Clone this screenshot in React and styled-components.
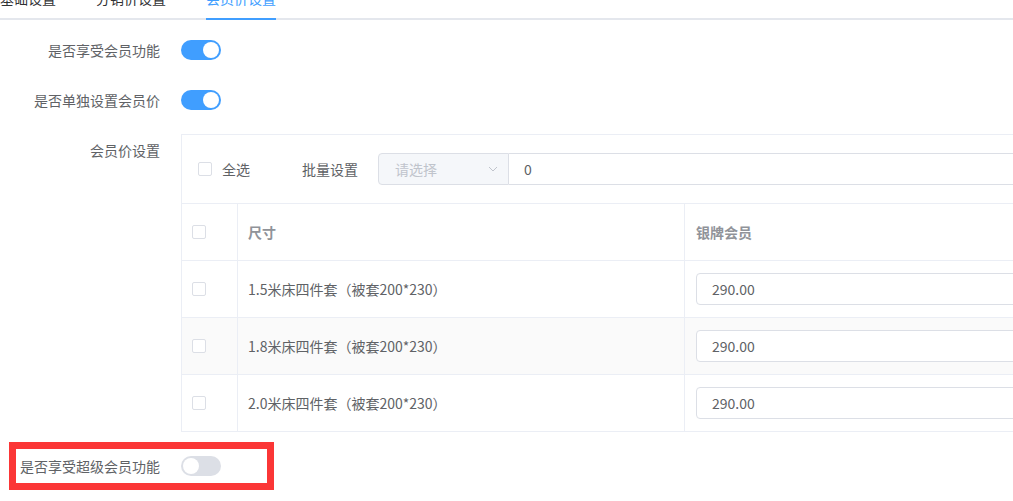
import styled, { createGlobalStyle } from "styled-components"

const Global = createGlobalStyle`
  html, body {
    margin: 0;
    padding: 0;
    background: #fff;
    overflow: hidden;
  }
  body {
    font-family: "Noto Sans CJK SC", "Microsoft YaHei", sans-serif;
    font-size: 14px;
    color: #606266;
  }
  * { box-sizing: border-box; }
`

const Page = styled.div`
  width: 1013px;
  height: 501px;
  overflow: hidden;
`

const TabBar = styled.div`
  display: flex;
  margin-top: -22px;
  border-bottom: 2px solid #e4e7ed;
  width: 1013px;
`

const Tab = styled.div`
  position: relative;
  height: 40px;
  line-height: 40px;
  padding: 0 20px;
  font-size: 14px;
  color: ${p => (p.active ? "#409eff" : "#303133")};
  &:first-child { padding-left: 0; }
  &::after {
    content: "";
    display: ${p => (p.active ? "block" : "none")};
    position: absolute;
    left: 20px;
    right: 20px;
    bottom: -2px;
    height: 2px;
    background: #409eff;
  }
`

const Form = styled.div`
  padding-top: 10px;
`

const FormItem = styled.div`
  display: flex;
  align-items: ${p => (p.top ? "flex-start" : "center")};
  margin-bottom: 10px;
`

const Label = styled.div`
  width: ${p => p.width || 160}px;
  flex: none;
  text-align: right;
  white-space: nowrap;
  line-height: 40px;
  height: 40px;
  font-size: 14px;
  color: #606266;
  margin-right: 21px;
`

const Switch = styled.div`
  position: relative;
  width: 40px;
  height: 20px;
  border-radius: 10px;
  background: ${p => (p.on ? "#409eff" : "#dcdfe6")};
  flex: none;
  &::after {
    content: "";
    position: absolute;
    top: 2px;
    left: ${p => (p.on ? "22px" : "2px")};
    width: 16px;
    height: 16px;
    border-radius: 50%;
    background: #fff;
  }
`

const TableBox = styled.div`
  margin-top: 4px;
  border: 1px solid #ebeef5;
  width: 1200px;
  flex: none;
`

const Toolbar = styled.div`
  height: 68px;
  display: flex;
  align-items: center;
  padding-left: 16px;
`

const Check = styled.span`
  display: inline-block;
  width: 14px;
  height: 14px;
  border: 1px solid #dcdfe6;
  border-radius: 2px;
  background: #fff;
  flex: none;
`

const CheckText = styled.span`
  margin-left: 10px;
  color: #606266;
  line-height: 20px;
`

const BatchLabel = styled.span`
  margin-left: 52px;
  margin-right: 20px;
  color: #606266;
`

const SelectBox = styled.div`
  width: 131px;
  height: 32px;
  border: 1px solid #dcdfe6;
  border-radius: 4px 0 0 4px;
  background: #f5f7fa;
  display: flex;
  align-items: center;
  justify-content: space-between;
  padding: 0 10px 0 16px;
  color: #c0c4cc;
`

const AppendInput = styled.div`
  width: 600px;
  height: 32px;
  border: 1px solid #dcdfe6;
  border-left: none;
  display: flex;
  align-items: center;
  padding-left: 15px;
  color: #606266;
`

const Row = styled.div`
  display: flex;
  height: 57px;
  border-top: 1px solid #ebeef5;
  background: ${p => (p.striped ? "#fafafa" : "#fff")};
`

const Cell = styled.div`
  width: ${p => p.width}px;
  flex: none;
  display: flex;
  align-items: center;
  padding-left: ${p => p.pad || 10}px;
  border-right: ${p => (p.last ? "none" : "1px solid #ebeef5")};
  color: ${p => (p.head ? "#909399" : "#606266")};
  font-weight: ${p => (p.head ? "bold" : "normal")};
`

const PriceInput = styled.div`
  width: 420px;
  height: 32px;
  border: 1px solid #dcdfe6;
  border-radius: 4px;
  background: #fff;
  display: flex;
  align-items: center;
  padding-left: 15px;
  color: #606266;
`

const Highlight = styled.div`
  margin-left: 9px;
  width: 265px;
  height: 48px;
  border: 7px solid #fb3636;
  display: flex;
  align-items: center;
`

const Chevron = () => (
  <svg width="10" height="6" viewBox="0 0 10 6" fill="none">
    <path d="M1 1l4 4 4-4" stroke="#c0c4cc" strokeWidth="1" />
  </svg>
)

const rows = [
  "1.5米床四件套（被套200*230）",
  "1.8米床四件套（被套200*230）",
  "2.0米床四件套（被套200*230）",
]

const App = () => {
  return (
    <Page>
      <Global />
      <TabBar>
        <Tab>基础设置</Tab>
        <Tab>分销价设置</Tab>
        <Tab active>会员价设置</Tab>
      </TabBar>
      <Form>
        <FormItem>
          <Label>是否享受会员功能</Label>
          <Switch on />
        </FormItem>
        <FormItem>
          <Label>是否单独设置会员价</Label>
          <Switch on />
        </FormItem>
        <FormItem top>
          <Label>会员价设置</Label>
          <TableBox>
            <Toolbar>
              <Check />
              <CheckText>全选</CheckText>
              <BatchLabel>批量设置</BatchLabel>
              <SelectBox>
                请选择
                <Chevron />
              </SelectBox>
              <AppendInput>0</AppendInput>
            </Toolbar>
            <Row>
              <Cell width={56}><Check /></Cell>
              <Cell width={447} head>尺寸</Cell>
              <Cell width={600} head last pad={11}>银牌会员</Cell>
            </Row>
            {rows.map((r, i) => (
              <Row key={r} striped={i === 1}>
                <Cell width={56}><Check /></Cell>
                <Cell width={447}>{r}</Cell>
                <Cell width={600} last pad={11}>
                  <PriceInput>290.00</PriceInput>
                </Cell>
              </Row>
            ))}
          </TableBox>
        </FormItem>
        <Highlight>
          <Label width={144}>是否享受超级会员功能</Label>
          <Switch />
        </Highlight>
      </Form>
    </Page>
  )
}

export default App
